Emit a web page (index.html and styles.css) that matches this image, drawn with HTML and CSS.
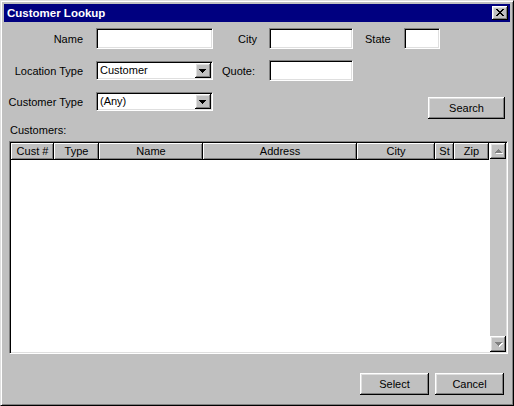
FILE: index.html
```html
<!DOCTYPE html>
<html>
<head>
<meta charset="utf-8">
<title>Customer Lookup</title>
<link rel="stylesheet" href="styles.css">
</head>
<body>
<div class="window">
  <div class="titlebar">
    <span class="title">Customer Lookup</span>
    <div class="close raised">
      <svg width="8" height="7" viewBox="0 0 8 7" shape-rendering="crispEdges">
        <g fill="#000">
          <rect x="0" y="0" width="2" height="1"/><rect x="6" y="0" width="2" height="1"/>
          <rect x="1" y="1" width="2" height="1"/><rect x="5" y="1" width="2" height="1"/>
          <rect x="2" y="2" width="4" height="1"/>
          <rect x="3" y="3" width="2" height="1"/>
          <rect x="2" y="4" width="4" height="1"/>
          <rect x="1" y="5" width="2" height="1"/><rect x="5" y="5" width="2" height="1"/>
          <rect x="0" y="6" width="2" height="1"/><rect x="6" y="6" width="2" height="1"/>
        </g>
      </svg>
    </div>
  </div>
  <div class="client">
    <div class="row row1">
      <label class="lbl-main">Name</label>
      <div class="edit w-name"></div>
      <label class="lbl-city">City</label>
      <div class="edit w-city"></div>
      <label class="lbl-state">State</label>
      <div class="edit w-state"></div>
    </div>
    <div class="row row2">
      <label class="lbl-main">Location Type</label>
      <div class="combo">
        <span class="combo-text">Customer</span>
        <div class="combo-btn raised">
          <svg width="7" height="4" viewBox="0 0 7 4" shape-rendering="crispEdges"><g fill="#000"><rect x="0" y="0" width="7" height="1"/><rect x="1" y="1" width="5" height="1"/><rect x="2" y="2" width="3" height="1"/><rect x="3" y="3" width="1" height="1"/></g></svg>
        </div>
      </div>
      <label class="lbl-quote">Quote:</label>
      <div class="edit w-city"></div>
    </div>
    <div class="row row3">
      <div class="group">
        <label class="lbl-main">Customer Type</label>
        <div class="combo">
          <span class="combo-text">(Any)</span>
          <div class="combo-btn raised">
            <svg width="7" height="4" viewBox="0 0 7 4" shape-rendering="crispEdges"><g fill="#000"><rect x="0" y="0" width="7" height="1"/><rect x="1" y="1" width="5" height="1"/><rect x="2" y="2" width="3" height="1"/><rect x="3" y="3" width="1" height="1"/></g></svg>
          </div>
        </div>
      </div>
      <div class="btn raised search">Search</div>
    </div>
    <div class="customers-label">Customers:</div>
    <div class="listview">
      <div class="list-main">
        <div class="header">
          <div class="hcell c-num">Cust #</div>
          <div class="hcell c-type">Type</div>
          <div class="hcell c-name">Name</div>
          <div class="hcell c-addr">Address</div>
          <div class="hcell c-city">City</div>
          <div class="hcell c-st">St</div>
          <div class="hcell c-zip">Zip</div>
        </div>
        <div class="rows"></div>
      </div>
      <div class="scrollbar">
        <div class="sbtn raised">
          <svg width="8" height="5" viewBox="0 0 8 5" shape-rendering="crispEdges">
            <g fill="#fff"><rect x="4" y="1" width="1" height="1"/><rect x="3" y="2" width="3" height="1"/><rect x="2" y="3" width="5" height="1"/><rect x="1" y="4" width="7" height="1"/></g>
            <g fill="#808080"><rect x="3" y="0" width="1" height="1"/><rect x="2" y="1" width="3" height="1"/><rect x="1" y="2" width="5" height="1"/><rect x="0" y="3" width="7" height="1"/></g>
          </svg>
        </div>
        <div class="track"></div>
        <div class="sbtn raised">
          <svg width="8" height="5" viewBox="0 0 8 5" shape-rendering="crispEdges">
            <g fill="#fff"><rect x="1" y="1" width="7" height="1"/><rect x="2" y="2" width="5" height="1"/><rect x="3" y="3" width="3" height="1"/><rect x="4" y="4" width="1" height="1"/></g>
            <g fill="#808080"><rect x="0" y="0" width="7" height="1"/><rect x="1" y="1" width="5" height="1"/><rect x="2" y="2" width="3" height="1"/><rect x="3" y="3" width="1" height="1"/></g>
          </svg>
        </div>
      </div>
    </div>
    <div class="footer">
      <div class="btn raised action">Select</div>
      <div class="btn raised action">Cancel</div>
    </div>
  </div>
</div>
</body>
</html>
```

FILE: styles.css
```css
* { box-sizing: border-box; }
html, body { margin: 0; padding: 0; }
body {
  width: 514px;
  height: 406px;
  overflow: hidden;
  background: #c0c0c0;
  font-family: "Liberation Sans", Arial, sans-serif;
  font-size: 11px;
  color: #000;
}
.window {
  width: 514px;
  height: 406px;
  background: #c0c0c0;
  border: 1px solid;
  border-color: #dfdfdf #000 #000 #dfdfdf;
  box-shadow: inset 1px 1px #fff, inset -1px -1px #808080;
  padding: 3px;
  display: flex;
  flex-direction: column;
}
.raised {
  background: #c0c0c0;
  box-shadow: inset -1px -1px #000, inset 1px 1px #fff, inset -2px -2px #808080, inset 2px 2px #dfdfdf;
}
.titlebar {
  height: 18px;
  background: #000080;
  color: #fff;
  display: flex;
  align-items: center;
  padding: 0 2px 0 3px;
}
.title {
  font-weight: bold;
  font-size: 11.5px;
  line-height: 18px;
}
.close {
  margin-left: auto;
  width: 16px;
  height: 14px;
  padding: 3px 0 0 4px;
}
.close svg { display: block; }
.client {
  flex: 1;
  display: flex;
  flex-direction: column;
  padding-top: 6px;
}
.row {
  display: flex;
  align-items: center;
}
.row1, .row2 { height: 21px; }
.row2, .row3 { margin-top: 11px; }
.row3 { align-items: flex-start; }
.group {
  display: flex;
  align-items: center;
  height: 19px;
}
label { white-space: nowrap; }
.lbl-main {
  width: 79px;
  margin-right: 13px;
  text-align: right;
}
.lbl-city { margin-left: 25px; width: 31px; }
.lbl-state { margin-left: 12px; width: 39px; }
.lbl-quote { margin-left: 9px; width: 47px; }
.edit {
  height: 21px;
  background: #fff;
  border: 1px solid;
  border-color: #808080 #fff #fff #808080;
  box-shadow: inset 1px 1px #000, inset -1px -1px #dfdfdf;
}
.w-name { width: 117px; }
.w-city { width: 84px; }
.w-state { width: 36px; }
.combo {
  width: 117px;
  height: 19px;
  background: #fff;
  border: 1px solid;
  border-color: #808080 #fff #fff #808080;
  box-shadow: inset 1px 1px #000, inset -1px -1px #dfdfdf;
  padding: 1px;
  display: flex;
}
.combo-text {
  flex: 1;
  padding-left: 2px;
  line-height: 15px;
}
.combo-btn {
  width: 16px;
  height: 15px;
  display: flex;
  align-items: center;
  justify-content: center;
}
.combo-btn svg { display: block; margin-left: -1px; }
.btn {
  height: 22px;
  display: flex;
  align-items: center;
  justify-content: center;
}
.search {
  width: 77px;
  margin-left: auto;
  margin-right: 5px;
  margin-top: 5px;
}
.customers-label {
  margin-top: 5px;
  padding-left: 6px;
  line-height: 13px;
}
.listview {
  margin: 4px 2px 0 5px;
  height: 213px;
  border: 1px solid;
  border-color: #808080 #fff #fff #808080;
  box-shadow: inset 1px 1px #000, inset -1px -1px #dfdfdf;
  padding: 1px;
  display: flex;
}
.list-main {
  flex: 1;
  background: #fff;
  display: flex;
  flex-direction: column;
}
.header {
  display: flex;
  height: 17px;
}
.hcell {
  height: 17px;
  line-height: 17px;
  text-align: center;
  background: #c0c0c0;
  box-shadow: inset -1px -1px #000, inset 1px 1px #fff, inset -2px -2px #808080;
  white-space: nowrap;
  overflow: hidden;
}
.c-num { width: 43px; }
.c-type { width: 45px; }
.c-name { width: 104px; }
.c-addr { width: 154px; }
.c-city { width: 78px; }
.c-st { width: 19px; }
.c-zip { width: 35px; }
.rows { flex: 1; }
.scrollbar {
  width: 16px;
  display: flex;
  flex-direction: column;
  background: #c0c0c0;
}
.sbtn {
  width: 16px;
  height: 16px;
  display: flex;
  align-items: center;
  justify-content: center;
}
.sbtn svg { display: block; margin-left: 1px; }
.track {
  flex: 1;
  background: #c4c4c4;
}
.footer {
  margin-top: 19px;
  display: flex;
  justify-content: flex-end;
  gap: 6px;
  padding-right: 6px;
}
.action { width: 69px; }
```
